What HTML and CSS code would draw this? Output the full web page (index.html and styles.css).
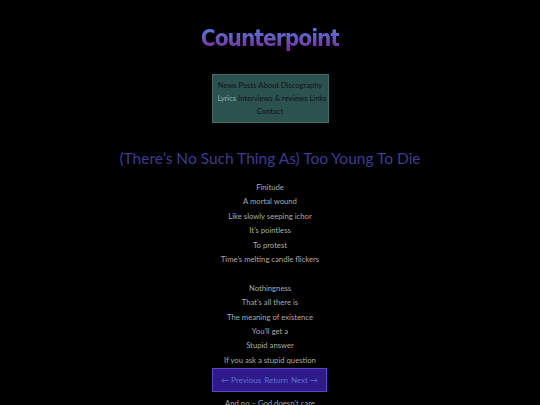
FILE: index.html
```html
<!DOCTYPE html>
<html>
<head>
<meta charset="utf-8">
<link rel="stylesheet" href="styles.css">
</head>
<body>
<header class="site-header">
  <h1 class="logo">Counterpoint</h1>
  <nav class="menu">
    <a href="#">News</a> <a href="#">Posts</a> <a href="#">About</a> <a href="#">Discography</a><br>
    <a href="#" class="current">Lyrics</a> <a href="#">Interviews &amp; reviews</a> <a href="#">Links</a><br>
    <a href="#">Contact</a>
  </nav>
</header>
<main class="song">
  <h2 class="song-title">(There’s No Such Thing As) Too Young To Die</h2>
  <div class="lyrics">
    <p>Finitude<br>A mortal wound<br>Like slowly seeping ichor<br>It’s pointless<br>To protest<br>Time’s melting candle flickers</p>
    <p>Nothingness<br>That’s all there is<br>The meaning of existence<br>You’ll get a<br>Stupid answer<br>If you ask a stupid question<br>&nbsp;<br>&nbsp;<br>And no – God doesn’t care</p>
  </div>
</main>
<nav class="pager">
  <a href="#">← Previous</a> <a href="#">Return</a> <a href="#">Next →</a>
</nav>
</body>
</html>
```
FILE: styles.css
```css
html, body {
  margin: 0;
  padding: 0;
  background: #000;
}
body {
  font-family: Lato, "Open Sans", sans-serif;
  color: #a8a8a8;
  text-align: center;
}
.site-header {
  display: flex;
  flex-direction: column;
  align-items: center;
  padding-top: 22px;
}
.logo {
  margin: 0;
  font-family: "DejaVu Sans", sans-serif;
  font-stretch: condensed;
  font-weight: bold;
  font-size: 22.5px;
  line-height: 32px;
  letter-spacing: -1px;
  background: linear-gradient(180deg, #5a72d6 25%, #7b2e9c 85%);
  -webkit-background-clip: text;
  background-clip: text;
  color: transparent;
}
.menu {
  margin-top: 20px;
  width: 105px;
  padding: 4px 5px;
  background: #2c5250;
  border: 1px solid #3f6d69;
  font-size: 7.6px;
  line-height: 13px;
  white-space: nowrap;
}
.menu a {
  color: #111;
  text-decoration: none;
}
.menu a.current {
  color: #8bb3ad;
}
.song-title {
  margin: 23px 0 0;
  font-weight: normal;
  font-size: 15.5px;
  line-height: 24px;
  color: #3d3c8f;
}
.lyrics {
  margin-top: 10px;
  font-size: 7.7px;
  line-height: 14.4px;
}
.lyrics p {
  margin: 0 0 14.4px;
}
.pager {
  position: fixed;
  left: 212px;
  bottom: 13px;
  width: 113px;
  height: 22px;
  display: flex;
  justify-content: center;
  align-items: center;
  gap: 3px;
  background: #2e1a8a;
  border: 1px solid #5c44c4;
  font-size: 8px;
}
.pager a {
  color: #5d70cf;
  text-decoration: none;
}
```
